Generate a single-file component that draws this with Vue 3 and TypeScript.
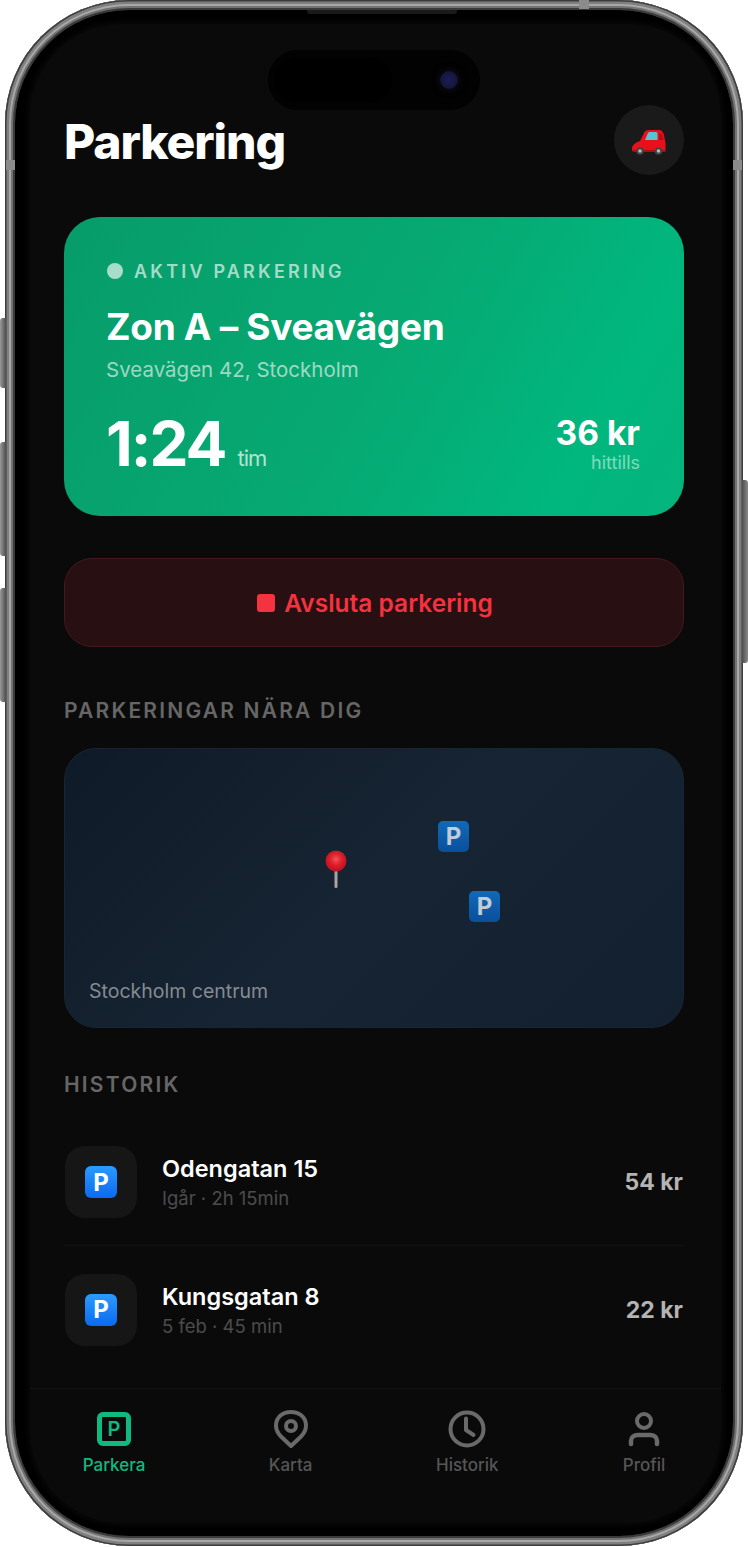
<script setup lang="ts">
interface HistoryRow {
  name: string
  meta: string
  price: string
}

const rows: HistoryRow[] = [
  { name: 'Odengatan 15', meta: 'Igår · 2h 15min', price: '54 kr' },
  { name: 'Kungsgatan 8', meta: '5 feb · 45 min', price: '22 kr' }
]

const tabs = [
  { id: 'park', label: 'Parkera' },
  { id: 'map', label: 'Karta' },
  { id: 'history', label: 'Historik' },
  { id: 'profile', label: 'Profil' }
]
</script>

<template>
  <div class="page">
    <div class="phone">
      <!-- side buttons -->
      <span class="side side-l1"></span>
      <span class="side side-l2"></span>
      <span class="side side-l3"></span>
      <span class="side side-r"></span>
      <span class="band band-l"></span>
      <span class="band band-r"></span>
      <span class="band band-t"></span>

      <div class="bezel">
        <span class="speaker"></span>
        <div class="screen">
          <div class="island">
            <span class="island-pill"></span>
            <span class="lens"></span>
          </div>

          <div class="content">
            <header class="header">
              <h1>Parkering</h1>
              <div class="avatar">
                <svg class="car" width="34" height="26" viewBox="0 0 34 26">
                  <path d="M0 20c0-4 3-6 8-8l3.500-7C12.500 2 14 1 17 1h10c3 0 4 2 5 5l1.500 8v7c0 1.500-.5 2-1.500 2H2c-1.500 0-2-1-2-3z" fill="#e8101a"/>
                  <path d="M13 11l2.500-6c.5-1.500 1.500-2 2.500-2h6c1 0 1.500 1 1.500 2v6z" fill="#57c4d4"/>
                  <path d="M27 4.500h1.500c1 0 1.500.5 1.800 1.500l1 5H27z" fill="#b80d15"/>
                  <path d="M0.500 21h33v1c0 .7-.5 1-1.500 1H2c-1 0-1.500-.5-1.500-2z" fill="#a80c14"/>
                  <circle cx="8" cy="22" r="3.800" fill="#444"/>
                  <circle cx="8" cy="22" r="1.800" fill="#b8b8b8"/>
                  <circle cx="26.500" cy="22" r="3.800" fill="#444"/>
                  <circle cx="26.500" cy="22" r="1.800" fill="#b8b8b8"/>
                </svg>
              </div>
            </header>

            <section class="active-card">
              <div class="status"><span class="dot"></span>AKTIV PARKERING</div>
              <div class="zone">Zon A – Sveavägen</div>
              <div class="address">Sveavägen 42, Stockholm</div>
              <div class="stats">
                <div class="time"><strong>1:24</strong><span>tim</span></div>
                <div class="cost">
                  <strong>36 kr</strong>
                  <span>hittills</span>
                </div>
              </div>
            </section>

            <button class="stop-btn"><span class="stop-icon"></span>Avsluta parkering</button>

            <h2 class="section-title near">PARKERINGAR NÄRA DIG</h2>

            <div class="map">
              <svg class="pin" width="24" height="40" viewBox="0 0 24 40">
                <defs>
                  <radialGradient id="pinHead" cx="50%" cy="42%" r="60%">
                    <stop offset="0%" stop-color="#f4545c"/>
                    <stop offset="45%" stop-color="#e0202c"/>
                    <stop offset="100%" stop-color="#b50f1c"/>
                  </radialGradient>
                </defs>
                <rect x="10.500" y="18" width="3" height="21" rx="1.200" fill="#a9a3a0"/>
                <circle cx="12" cy="12" r="10.500" fill="url(#pinHead)"/>
              </svg>
              <span class="map-p map-p1">P</span>
              <span class="map-p map-p2">P</span>
              <span class="map-label">Stockholm centrum</span>
            </div>

            <h2 class="section-title history">HISTORIK</h2>

            <div class="rows">
              <div v-for="row in rows" :key="row.name" class="row">
                <div class="row-icon"><span class="blue-p">P</span></div>
                <div class="row-text">
                  <div class="row-name">{{ row.name }}</div>
                  <div class="row-meta">{{ row.meta }}</div>
                </div>
                <div class="row-price">{{ row.price }}</div>
              </div>
            </div>
          </div>

          <nav class="tabbar">
            <div v-for="tab in tabs" :key="tab.id" class="tab" :class="{ active: tab.id === 'park' }">
              <svg width="40" height="40" viewBox="0 0 40 40" fill="none" stroke="currentColor" stroke-width="4">
                <template v-if="tab.id === 'park'">
                  <rect x="5.500" y="5.500" width="29" height="29" rx="3.500" stroke-width="5"/>
                  <text x="20" y="27" text-anchor="middle" class="tab-p">P</text>
                </template>
                <template v-else-if="tab.id === 'map'">
                  <path d="M20 37 10 27.500C6.500 24 5 20 5 16.500 5 8 12 3 20 3S35 8 35 16.500c0 3.500-1.500 7.500-5 11z" stroke-linejoin="round"/>
                  <circle cx="20" cy="17" r="5"/>
                </template>
                <template v-else-if="tab.id === 'history'">
                  <circle cx="20" cy="20" r="16.500"/>
                  <path d="M19 9.500V21l7.500 5" stroke-linecap="round" stroke-linejoin="round"/>
                </template>
                <template v-else>
                  <circle cx="20" cy="12" r="7"/>
                  <path d="M7 35v-3c0-4 3-6 7-6h12c4 0 7 2 7 6v3" stroke-width="4.500" stroke-linecap="round"/>
                </template>
              </svg>
              <span>{{ tab.label }}</span>
            </div>
          </nav>
        </div>
      </div>
    </div>
  </div>
</template>

<style>
html,
body {
  margin: 0;
  background: #ffffff;
}
</style>

<style scoped>
* {
  box-sizing: border-box;
}

.page {
  width: 748px;
  height: 1547px;
  padding: 0 5px;
  font-family: Inter, "Liberation Sans", sans-serif;
  overflow: hidden;
}

.phone {
  position: relative;
  width: 738px;
  height: 1546px;
  padding: 10px;
  border-radius: 124px;
  background: #6d6d6d;
  box-shadow:
    inset 0 0 0 1.5px #3d3d3d,
    inset 0 0 0 4px #7f7f7f,
    inset 0 0 0 6px #a8a8a8,
    inset 0 0 0 8px #737373,
    inset 0 0 0 10px #3a3a3a;
}

.side {
  position: absolute;
  width: 6px;
  background: linear-gradient(90deg, #9a9a9a, #4e4e4e);
  border-radius: 3px 0 0 3px;
}

.side-l1 { left: -5px; top: 318px; height: 70px; }
.side-l2 { left: -5px; top: 442px; height: 114px; }
.side-l3 { left: -5px; top: 588px; height: 114px; }

.side-r {
  right: -5px;
  top: 480px;
  height: 183px;
  background: linear-gradient(90deg, #4e4e4e, #8a8a8a);
  border-radius: 0 3px 3px 0;
}

.band {
  position: absolute;
  background: #8b8b8b;
}

.band-l { left: 1px; top: 160px; width: 9px; height: 10px; }
.band-r { right: 1px; top: 160px; width: 9px; height: 10px; }
.band-t { left: 574px; top: 0; width: 10px; height: 9px; }

.bezel {
  position: relative;
  width: 718px;
  height: 1526px;
  padding: 14px 12px 13px 15px;
  border-radius: 114px;
  background: #000000;
}

.speaker {
  position: absolute;
  left: 292px;
  top: 0;
  width: 150px;
  height: 4px;
  background: #1a1a1a;
  border-radius: 0 0 3px 3px;
}

.screen {
  position: relative;
  display: flex;
  flex-direction: column;
  height: 100%;
  border-radius: 92px;
  background: #0a0a0a;
  overflow: hidden;
  box-shadow: 0 0 6px 2px #0a0a0a;
}

.island {
  position: absolute;
  left: 238px;
  top: 26px;
  width: 212px;
  height: 60px;
  border-radius: 30px;
  background: #020202;
}

.island-pill {
  position: absolute;
  left: 6px;
  top: 7px;
  width: 118px;
  height: 46px;
  border-radius: 23px;
  background: #000000;
}

.lens {
  position: absolute;
  left: 172px;
  top: 21px;
  width: 18px;
  height: 18px;
  border-radius: 50%;
  background: radial-gradient(circle at 50% 50%, #1b1c58 0%, #17183f 55%, #0a0a1a 100%);
  box-shadow: 0 0 6px 2px #0b0b14;
}

.content {
  flex: 1;
  padding: 81px 37px 0 34px;
}

.header {
  display: flex;
  align-items: center;
  justify-content: space-between;
  height: 70px;
}

h1 {
  margin: 4px 0 0;
  font-size: 48px;
  line-height: 66px;
  font-weight: 800;
  letter-spacing: -1.1px;
  color: #ffffff;
}

.avatar {
  display: flex;
  align-items: center;
  justify-content: center;
  width: 70px;
  height: 70px;
  border-radius: 50%;
  background: #1a1a1a;
}

.car {
  margin-top: 3px;
}

.active-card {
  display: flex;
  flex-direction: column;
  height: 299px;
  margin-top: 42px;
  padding: 44px 44px 0 42px;
  border-radius: 36px;
  background: linear-gradient(120deg, #079c6a 0%, #07a972 50%, #00b77e 82%, #05b47c 100%);
  color: #ffffff;
}

.status {
  display: flex;
  align-items: center;
  gap: 11px;
  height: 20px;
  font-size: 18px;
  font-weight: 600;
  letter-spacing: 3.200px;
  color: rgba(255, 255, 255, 0.65);
}

.dot {
  width: 16px;
  height: 16px;
  margin-left: 1px;
  border-radius: 50%;
  background: rgba(255, 255, 255, 0.65);
}

.zone {
  margin-top: 24px;
  font-size: 37px;
  line-height: 44px;
  font-weight: 700;
  letter-spacing: -0.3px;
}

.address {
  margin-top: 8px;
  font-size: 20.500px;
  line-height: 26px;
  color: rgba(255, 255, 255, 0.6);
}

.stats {
  display: flex;
  align-items: flex-end;
  justify-content: space-between;
  margin-top: 24px;
}

.time {
  display: flex;
  align-items: baseline;
  gap: 12px;
}

.time strong {
  font-size: 62px;
  line-height: 74px;
  font-weight: 700;
  letter-spacing: -2px;
}

.time span {
  font-size: 22px;
  letter-spacing: -1px;
  color: rgba(255, 255, 255, 0.7);
}

.cost {
  display: flex;
  flex-direction: column;
  align-items: flex-end;
  padding-bottom: 7px;
}

.cost strong {
  font-size: 33.500px;
  line-height: 40px;
  font-weight: 700;
}

.cost span {
  margin-top: -1px;
  font-size: 18px;
  line-height: 22px;
  color: rgba(255, 255, 255, 0.5);
}

.stop-btn {
  display: flex;
  align-items: center;
  justify-content: center;
  gap: 9px;
  width: 100%;
  height: 89px;
  margin-top: 42px;
  border: 1.5px solid #451a1e;
  border-radius: 28px;
  background: #280f12;
  font-family: inherit;
  font-size: 24.500px;
  font-weight: 600;
  color: #f5323f;
}

.stop-icon {
  width: 18px;
  height: 18px;
  margin-left: 2px;
  border-radius: 3px;
  background: #f5323f;
}

.section-title {
  margin: 0;
  font-size: 21px;
  line-height: 26px;
  font-weight: 600;
  letter-spacing: 2.200px;
  color: #666666;
}

.near {
  margin-top: 51px;
}

.map {
  position: relative;
  height: 280px;
  margin-top: 24px;
  border: 1.5px solid #182634;
  border-radius: 32px;
  background: linear-gradient(135deg, #0e1a27 0%, #172433 50%, #122030 100%);
}

.pin {
  position: absolute;
  left: 259px;
  top: 100px;
}

.map-p {
  position: absolute;
  display: flex;
  align-items: center;
  justify-content: center;
  width: 31px;
  height: 31px;
  border-radius: 5px;
  background: linear-gradient(180deg, #0f6ab8, #0a4f9c);
  font-size: 24px;
  font-weight: 700;
  color: #c3cbd5;
}

.map-p1 { left: 373px; top: 72px; }
.map-p2 { left: 404px; top: 142px; }

.map-label {
  position: absolute;
  left: 24px;
  bottom: 24px;
  font-size: 19.500px;
  line-height: 24px;
  color: #858b93;
}

.history {
  margin-top: 44px;
}

.rows {
  margin-top: 21px;
}

.row {
  display: flex;
  align-items: center;
  height: 127px;
  border-bottom: 1.5px solid #131313;
}

.row:last-child {
  border-bottom: none;
}

.row-icon {
  display: flex;
  align-items: center;
  justify-content: center;
  width: 72px;
  height: 72px;
  margin-left: 1px;
  border-radius: 20px;
  background: #161616;
}

.blue-p {
  display: flex;
  align-items: center;
  justify-content: center;
  width: 32px;
  height: 32px;
  border-radius: 6px;
  background: linear-gradient(180deg, #2b9bff 0%, #0a6af0 100%);
  font-size: 24px;
  font-weight: 700;
  color: #ffffff;
}

.row-text {
  flex: 1;
  margin-left: 25px;
}

.row-name {
  font-size: 23.500px;
  line-height: 30px;
  font-weight: 600;
  color: #ffffff;
}

.row-meta {
  margin-top: 2px;
  font-size: 18.500px;
  line-height: 24px;
  color: #4c4c4c;
}

.row-price {
  margin-right: 1px;
  font-size: 23px;
  font-weight: 700;
  color: #b4b4b4;
}

.tabbar {
  display: flex;
  justify-content: space-between;
  height: 135px;
  padding: 20px 37px 0 44px;
  border-top: 1.5px solid #141414;
}

.tab {
  display: flex;
  flex-direction: column;
  align-items: center;
  width: 80px;
  color: #6a6a6a;
}

.tab span {
  margin-top: 5px;
  font-size: 17px;
  line-height: 22px;
  font-weight: 500;
  color: #565656;
}

.tab.active,
.tab.active span {
  color: #10b981;
}

.tab-p {
  font-family: Inter, "Liberation Sans", sans-serif;
  font-size: 20px;
  font-weight: 600;
  fill: currentColor;
  stroke: none;
}
</style>
